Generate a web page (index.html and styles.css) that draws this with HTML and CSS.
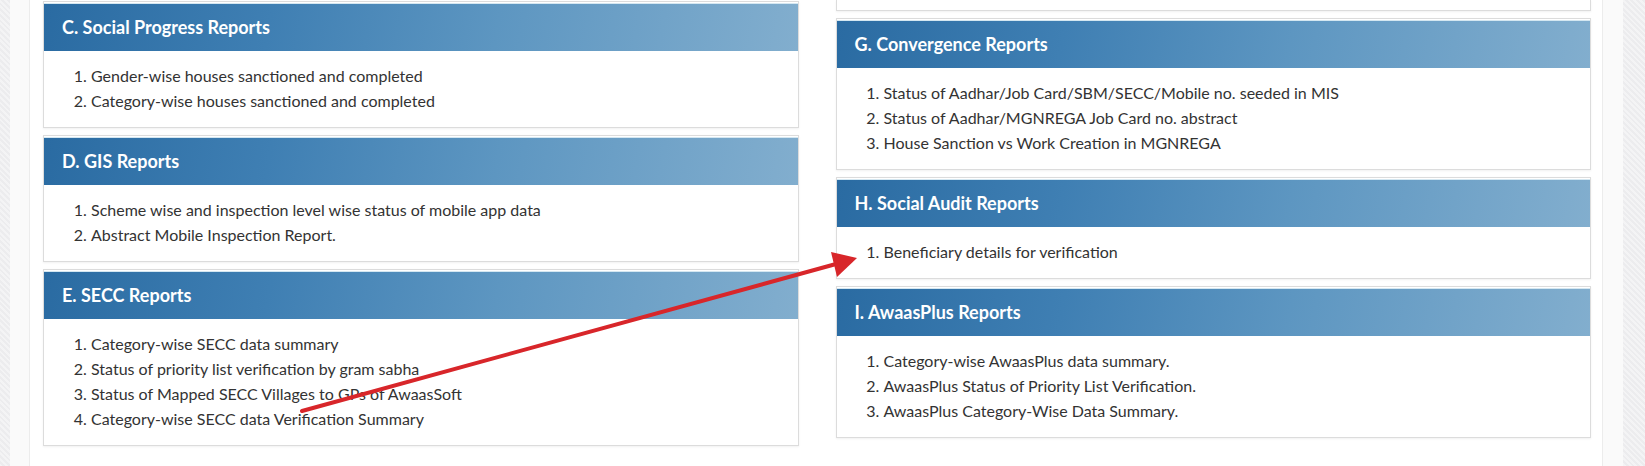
FILE: index.html
```html
<!DOCTYPE html>
<html lang="en">
<head>
  <meta charset="UTF-8">
  <meta name="viewport" content="width=device-width, initial-scale=1.0">
  <title>AwaasSoft Reports</title>
  <link rel="stylesheet" href="styles.css">
</head>
<body>
  <div class="page">
    <div class="content">
      <div class="columns">
        <div class="col col-left">
          <div class="panel">
            <div class="panel-heading">C. Social Progress Reports</div>
            <ol class="panel-list">
              <li>Gender-wise houses sanctioned and completed</li>
              <li>Category-wise houses sanctioned and completed</li>
            </ol>
          </div>
          <div class="panel">
            <div class="panel-heading">D. GIS Reports</div>
            <ol class="panel-list">
              <li>Scheme wise and inspection level wise status of mobile app data</li>
              <li>Abstract Mobile Inspection Report.</li>
            </ol>
          </div>
          <div class="panel">
            <div class="panel-heading">E. SECC Reports</div>
            <ol class="panel-list">
              <li>Category-wise SECC data summary</li>
              <li>Status of priority list verification by gram sabha</li>
              <li>Status of Mapped SECC Villages to GPs of AwaasSoft</li>
              <li>Category-wise SECC data Verification Summary</li>
            </ol>
          </div>
        </div>
        <div class="col col-right">
          <div class="panel panel-cut"></div>
          <div class="panel">
            <div class="panel-heading">G. Convergence Reports</div>
            <ol class="panel-list">
              <li>Status of Aadhar/Job Card/SBM/SECC/Mobile no. seeded in MIS</li>
              <li>Status of Aadhar/MGNREGA Job Card no. abstract</li>
              <li>House Sanction vs Work Creation in MGNREGA</li>
            </ol>
          </div>
          <div class="panel">
            <div class="panel-heading">H. Social Audit Reports</div>
            <ol class="panel-list">
              <li>Beneficiary details for verification</li>
            </ol>
          </div>
          <div class="panel">
            <div class="panel-heading">I. AwaasPlus Reports</div>
            <ol class="panel-list">
              <li>Category-wise AwaasPlus data summary.</li>
              <li>AwaasPlus Status of Priority List Verification.</li>
              <li>AwaasPlus Category-Wise Data Summary.</li>
            </ol>
          </div>
        </div>
      </div>
    </div>
  </div>

  <!-- annotation arrow drawn over the page -->
  <svg class="arrow" width="1645" height="466" viewBox="0 0 1645 466">
    <line x1="302" y1="411" x2="836" y2="264" stroke="#d8262a" stroke-width="4" stroke-linecap="round"/>
    <polygon points="857,258 831,252 837,277" fill="#d8262a"/>
  </svg>
</body>
</html>
```

FILE: styles.css
```css
body {
  margin: 0;
  font-family: Lato, "Open Sans", sans-serif;
  color: #333;
  background-color: #ececee;
  background-image: repeating-linear-gradient(45deg, rgba(255, 255, 255, 0.4) 0 2px, transparent 2px 4px);
  position: relative;
}
.page {
  margin-left: 10px;
  width: 1613px;
  min-height: 466px;
  background: #fafafa;
  padding: 0 20px 0 19px;
  box-sizing: border-box;
}
.content {
  background: #fff;
  border-left: 1px solid #ececec;
  border-right: 1px solid #ececec;
  min-height: 466px;
  padding: 0 11px 0 13px;
}
.columns {
  display: grid;
  grid-template-columns: 1fr 1fr;
  column-gap: 37px;
}
.col-left {
  padding-top: 1px;
}
.panel {
  border: 1px solid #dcdcdc;
  background: #fff;
  margin-bottom: 7px;
  padding-top: 1px;
  box-shadow: 0 1px 2px rgba(0, 0, 0, 0.06);
}
.panel-cut {
  border-top: none;
  height: 10px;
  padding: 0;
}
.panel-heading {
  height: 47px;
  line-height: 47px;
  border-top: 1px solid #d4e7f1;
  padding-left: 18px;
  color: #fff;
  font-size: 18px;
  font-weight: bold;
  background: linear-gradient(100deg, #2a6ba2 0%, #3f7fb3 30%, #5d96c1 60%, #82aece 100%);
}
.panel-list {
  margin: 0;
  padding: 12px 0 14px 47px;
  font-size: 16px;
  line-height: 25px;
}
.arrow {
  position: absolute;
  top: 0;
  left: 0;
  pointer-events: none;
}
```
